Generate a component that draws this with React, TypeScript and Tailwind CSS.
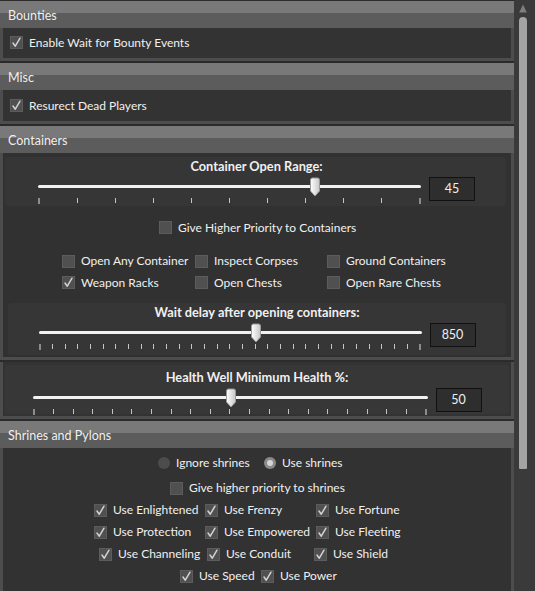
import React from "react";

function Check({ checked }: { checked?: boolean }) {
  return (
    <span className="w-[13px] h-[13px] shrink-0 bg-[#505050] border border-[#5c5c5c] flex items-center justify-center">
      {checked && (
        <svg width="11" height="11" viewBox="0 0 11 11">
          <path d="M2 6 L4.3 9.2 L9 1.2" fill="none" stroke="#d2d2d2" strokeWidth="1.5" strokeLinecap="round" strokeLinejoin="round" />
        </svg>
      )}
    </span>
  );
}

function Radio({ on }: { on?: boolean }) {
  return (
    <span
      className={
        on
          ? "w-[12px] h-[12px] shrink-0 rounded-full bg-[#8a8a8a] flex items-center justify-center"
          : "w-[12px] h-[12px] shrink-0 rounded-full bg-[#4c4c4c]"
      }
    >
      {on && <span className="w-[6px] h-[6px] rounded-full bg-[#d6d6d6]" />}
    </span>
  );
}

function Item({ label, checked, w }: { label: string; checked?: boolean; w?: string }) {
  return (
    <div className={"flex items-center gap-[6px] shrink-0 " + (w ?? "")}>
      <Check checked={checked} />
      <span className="whitespace-nowrap">{label}</span>
    </div>
  );
}

function Thumb() {
  return (
    <svg width="12" height="20" viewBox="0 0 12 20">
      <defs>
        <linearGradient id="tg" x1="0" y1="0" x2="1" y2="0">
          <stop offset="0" stopColor="#ffffff" />
          <stop offset="1" stopColor="#c8c8c8" />
        </linearGradient>
      </defs>
      <path d="M1.5 3 Q1.5 1 3.5 1 H8.5 Q10.5 1 10.5 3 V14 L6 19 L1.5 14 Z" fill="url(#tg)" stroke="#9a9a9a" strokeWidth="1" />
    </svg>
  );
}

function Slider({
  title,
  value,
  pos,
  ticks,
  trackW,
}: {
  title: string;
  value: string;
  pos: number;
  ticks: number;
  trackW: string;
}) {
  return (
    <div className="flex flex-col">
      <div className="h-[20px] flex items-center justify-center font-bold text-[12.8px]">{title}</div>
      <div className="flex items-start justify-center gap-[8px]">
        <div className={"relative h-[26px] " + trackW}>
          <div className="absolute left-0 right-0 top-[8px] h-[3px] rounded-full bg-[#f2f2f2]" />
          <div className="absolute left-0 right-0 top-[21px] h-[6px] flex justify-between items-start">
            {Array.from({ length: ticks }).map((_, i) =>
              i === 0 || i === ticks - 1 ? (
                <span key={i} className="w-[2px] h-[6px] bg-[#8c8c8c]" />
              ) : (
                <span key={i} className="w-px h-[5px] bg-[#c4c4c4]" />
              )
            )}
          </div>
          <div className="absolute top-0 -ml-[6px]" style={{ left: `${pos}%` }}>
            <Thumb />
          </div>
        </div>
        <div className="w-[46px] h-[24px] border border-[#111111] bg-[#2e2e2e] flex items-center justify-center text-[12.5px]">
          {value}
        </div>
      </div>
    </div>
  );
}

function Header({ title }: { title: string }) {
  return (
    <div className="h-[27px] flex items-center pl-[8px] pt-[3px] bg-[linear-gradient(to_bottom,#797979_0,#797979_44%,#5c5c5c_44%,#5c5c5c_100%)] text-[12.5px]">
      {title}
    </div>
  );
}

export default function App() {
  return (
    <div
      className="w-[535px] h-[591px] overflow-hidden flex bg-[#2b2b2b] text-[#f0f0f0] text-[12px]"
      style={{ fontFamily: "Lato, 'Noto Sans', sans-serif" }}
    >
      <div className="w-[514px] flex flex-col gap-[2px] pt-px shrink-0">
        {/* Bounties */}
        <div>
          <Header title="Bounties" />
          <div className="h-[33px] bg-[#333333] border-x-[3px] border-b-[3px] border-[#4d4d4d] flex items-center pl-[7px] pb-[1px]">
            <Item label="Enable Wait for Bounty Events" checked />
          </div>
        </div>

        {/* Misc */}
        <div>
          <Header title="Misc" />
          <div className="h-[34px] bg-[#333333] border-x-[3px] border-b-[3px] border-[#4d4d4d] flex items-center pl-[7px]">
            <Item label="Resurect Dead Players" checked />
          </div>
        </div>

        {/* Containers */}
        <div>
          <Header title="Containers" />
          <div className="h-[207px] bg-[#313131] border-x-[3px] border-b-[3px] border-[#4d4d4d] flex flex-col pt-[4px] pl-[2px] pr-[5px]">
            <div className="h-[49px] rounded-[3px] bg-[#363636] pl-[2px]">
              <Slider title="Container Open Range:" value="45" pos={72.3} ticks={11} trackW="w-[383px]" />
            </div>
            <div className="h-[43px] flex items-center pl-[154px]">
              <Item label="Give Higher Priority to Containers" />
            </div>
            <div className="h-[22px] flex items-center pl-[57px] pt-[2px]">
              <Item label="Open Any Container" w="w-[133px]" />
              <Item label="Inspect Corpses" w="w-[132px]" />
              <Item label="Ground Containers" />
            </div>
            <div className="h-[22px] flex items-center pl-[57px] pt-[1px]">
              <Item label="Weapon Racks" checked w="w-[133px]" />
              <Item label="Open Chests" w="w-[132px]" />
              <Item label="Open Rare Chests" />
            </div>
            <div className="mt-[10px] h-[52px] rounded-[3px] bg-[#363636] ml-[3px]">
              <Slider title="Wait delay after opening containers:" value="850" pos={56.7} ticks={31} trackW="w-[383px]" />
            </div>
          </div>
        </div>

        {/* Health well */}
        <div className="h-[57px] bg-[#333333] border-x-[3px] border-b-[3px] border-[#4d4d4d] pt-[3px] px-[2px]">
          <div className="h-[49px] rounded-[3px] bg-[#373737] pt-[3px]">
            <Slider title="Health Well Minimum Health %:" value="50" pos={50.3} ticks={21} trackW="w-[395px]" />
          </div>
        </div>

        {/* Shrines */}
        <div className="flex-1 flex flex-col">
          <Header title="Shrines and Pylons" />
          <div className="flex-1 bg-[#323232] border-x-[3px] border-[#4d4d4d] pt-[4px]">
            <div className="h-[22px] flex items-center pl-[155px]">
              <div className="w-[106px] flex items-center gap-[6px]">
                <Radio />
                <span>Ignore shrines</span>
              </div>
              <div className="flex items-center gap-[6px]">
                <Radio on />
                <span>Use shrines</span>
              </div>
            </div>
            <div className="h-[25px] pt-[3px] flex items-center pl-[167px]">
              <Item label="Give higher priority to shrines" />
            </div>
            <div className="h-[22px] flex items-center pl-[91px]">
              <Item label="Use Enlightened" checked w="w-[111px]" />
              <Item label="Use Frenzy" checked w="w-[111px]" />
              <Item label="Use Fortune" checked />
            </div>
            <div className="h-[22px] flex items-center pl-[91px]">
              <Item label="Use Protection" checked w="w-[111px]" />
              <Item label="Use Empowered" checked w="w-[111px]" />
              <Item label="Use Fleeting" checked />
            </div>
            <div className="h-[22px] flex items-center pl-[96px]">
              <Item label="Use Channeling" checked w="w-[108px]" />
              <Item label="Use Conduit" checked w="w-[107px]" />
              <Item label="Use Shield" checked />
            </div>
            <div className="h-[22px] flex items-center pl-[177px]">
              <Item label="Use Speed" checked w="w-[81px]" />
              <Item label="Use Power" checked />
            </div>
          </div>
        </div>
      </div>

      {/* Scrollbar */}
      <div className="w-[21px] bg-[#3a3a3a] flex flex-col items-start pl-[5px] shrink-0">
        <div className="h-[17px] w-[8px] flex items-center justify-center">
          <svg width="8" height="9" viewBox="0 0 8 9">
            <path d="M4 0.5 L7.8 8.5 H0.2 Z" fill="#7e7e7e" />
          </svg>
        </div>
        <div className="w-[8px] h-[452px] rounded-t-[4px] rounded-b-[1px] bg-[#a4a4a4]" />
      </div>
    </div>
  );
}
